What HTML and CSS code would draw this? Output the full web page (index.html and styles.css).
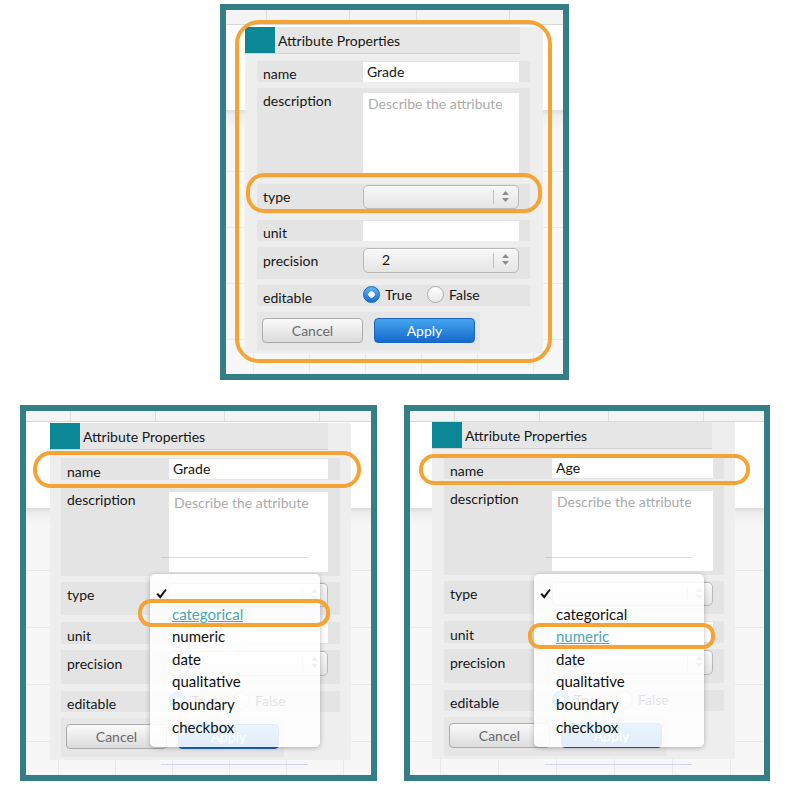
FILE: index.html
```html
<!DOCTYPE html>
<html>
<head>
<meta charset="utf-8">
<title>Attribute Properties</title>
<link rel="stylesheet" href="styles.css">
</head>
<body>
<div class="page">
  <div class="top-row">
    <div class="panel panel-top">
      <div class="strip"><span class="c1"></span><span class="c2"></span><span class="c3"></span><span class="c4"></span></div>
      <div class="dialog">
        <div class="dlg-head"><div class="dlg-icon"></div><div class="dlg-title">Attribute Properties</div></div>
        <div class="dlg-body">
          <div class="frow r-name"><span class="lbl lbl-b">name</span><div class="inp">Grade</div></div>
          <div class="frow r-desc"><span class="lbl lbl-t">description</span><div class="ta">Describe the attribute</div></div>
          <div class="frow r-type"><span class="lbl lbl-c">type</span><div class="sel"><span class="sel-val"></span><span class="sel-div"></span><svg class="sel-arr" width="7" height="11" viewBox="0 0 7 11"><path d="M3.5 0 L7 4 L0 4 Z M0 7 L7 7 L3.5 11 Z" fill="#8c8c8c"/></svg></div></div>
          <div class="frow r-unit"><span class="lbl lbl-b">unit</span><div class="inp"></div></div>
          <div class="frow r-prec"><span class="lbl lbl-p">precision</span><div class="sel sel-p"><span class="sel-val">2</span><span class="sel-div"></span><svg class="sel-arr" width="7" height="11" viewBox="0 0 7 11"><path d="M3.5 0 L7 4 L0 4 Z M0 7 L7 7 L3.5 11 Z" fill="#8c8c8c"/></svg></div></div>
          <div class="frow r-edit"><span class="lbl lbl-b">editable</span><div class="radios"><span class="opt"><span class="rb on"></span>True</span><span class="opt"><span class="rb off"></span>False</span></div></div>
          <div class="btns"><button class="btn cancel">Cancel</button><button class="btn apply">Apply</button></div>
        </div>
      </div>
      <div class="ring ring-top-big"></div>
      <div class="ring ring-top-type"></div>
    </div>
  </div>

  <div class="bottom-row">
    <div class="panel panel-bl">
      <div class="strip"><span class="c1"></span><span class="c2"></span><span class="c3"></span><span class="c4"></span></div>
      <div class="dialog">
        <div class="dlg-head"><div class="dlg-icon"></div><div class="dlg-title">Attribute Properties</div></div>
        <div class="dlg-body">
          <div class="frow r-name"><span class="lbl lbl-b">name</span><div class="inp">Grade</div></div>
          <div class="frow r-desc"><span class="lbl lbl-t">description</span><div class="ta">Describe the attribute</div></div>
          <div class="frow r-type"><span class="lbl lbl-c">type</span><div class="sel"><span class="sel-val"></span><span class="sel-div"></span><svg class="sel-arr" width="7" height="11" viewBox="0 0 7 11"><path d="M3.5 0 L7 4 L0 4 Z M0 7 L7 7 L3.5 11 Z" fill="#8c8c8c"/></svg></div></div>
          <div class="frow r-unit"><span class="lbl lbl-b">unit</span><div class="inp"></div></div>
          <div class="frow r-prec"><span class="lbl lbl-p">precision</span><div class="sel sel-p"><span class="sel-val">2</span><span class="sel-div"></span><svg class="sel-arr" width="7" height="11" viewBox="0 0 7 11"><path d="M3.5 0 L7 4 L0 4 Z M0 7 L7 7 L3.5 11 Z" fill="#8c8c8c"/></svg></div></div>
          <div class="frow r-edit"><span class="lbl lbl-b">editable</span><div class="radios"><span class="opt"><span class="rb on"></span>True</span><span class="opt"><span class="rb off"></span>False</span></div></div>
          <div class="btns"><button class="btn cancel">Cancel</button><button class="btn apply">Apply</button></div>
        </div>
        <div class="menu">
          <div class="mi"><svg class="check" width="11" height="10" viewBox="0 0 11 10"><path d="M0.4 5.3 L2.2 4 L4.1 6.5 L9.2 0 L10.7 1.1 L4.3 9.7 Z" fill="#111"/></svg></div>
          <div class="mi"><span class="hl">categorical</span></div>
          <div class="mi">numeric</div>
          <div class="mi">date</div>
          <div class="mi">qualitative</div>
          <div class="mi">boundary</div>
          <div class="mi">checkbox</div>
        </div>
      </div>
      <div class="ghost g1"></div>
      <div class="ghost g2"></div>
      <div class="ring ring-bl-name"></div>
      <div class="ring ring-bl-cat"></div>
    </div>

    <div class="panel panel-br">
      <div class="strip"><span class="c1"></span><span class="c2"></span><span class="c3"></span><span class="c4"></span></div>
      <div class="dialog">
        <div class="dlg-head"><div class="dlg-icon"></div><div class="dlg-title">Attribute Properties</div></div>
        <div class="dlg-body">
          <div class="frow r-name"><span class="lbl lbl-b">name</span><div class="inp">Age</div></div>
          <div class="frow r-desc"><span class="lbl lbl-t">description</span><div class="ta">Describe the attribute</div></div>
          <div class="frow r-type"><span class="lbl lbl-c">type</span><div class="sel"><span class="sel-val"></span><span class="sel-div"></span><svg class="sel-arr" width="7" height="11" viewBox="0 0 7 11"><path d="M3.5 0 L7 4 L0 4 Z M0 7 L7 7 L3.5 11 Z" fill="#8c8c8c"/></svg></div></div>
          <div class="frow r-unit"><span class="lbl lbl-b">unit</span><div class="inp"></div></div>
          <div class="frow r-prec"><span class="lbl lbl-p">precision</span><div class="sel sel-p"><span class="sel-val">2</span><span class="sel-div"></span><svg class="sel-arr" width="7" height="11" viewBox="0 0 7 11"><path d="M3.5 0 L7 4 L0 4 Z M0 7 L7 7 L3.5 11 Z" fill="#8c8c8c"/></svg></div></div>
          <div class="frow r-edit"><span class="lbl lbl-b">editable</span><div class="radios"><span class="opt"><span class="rb on"></span>True</span><span class="opt"><span class="rb off"></span>False</span></div></div>
          <div class="btns"><button class="btn cancel">Cancel</button><button class="btn apply">Apply</button></div>
        </div>
        <div class="menu">
          <div class="mi"><svg class="check" width="11" height="10" viewBox="0 0 11 10"><path d="M0.4 5.3 L2.2 4 L4.1 6.5 L9.2 0 L10.7 1.1 L4.3 9.7 Z" fill="#111"/></svg></div>
          <div class="mi">categorical</div>
          <div class="mi"><span class="hl">numeric</span></div>
          <div class="mi">date</div>
          <div class="mi">qualitative</div>
          <div class="mi">boundary</div>
          <div class="mi">checkbox</div>
        </div>
      </div>
      <div class="ghost g1"></div>
      <div class="ghost g2"></div>
      <div class="ring ring-br-name"></div>
      <div class="ring ring-br-num"></div>
    </div>
  </div>
</div>
</body>
</html>
```

FILE: styles.css
```css
* { box-sizing: border-box; }
html, body { margin: 0; padding: 0; background: #fff; }
body {
  width: 788px;
  height: 787px;
  overflow: hidden;
  font-family: Lato, "Open Sans", "Liberation Sans", sans-serif;
  color: #1b1b1b;
}

.page { padding-top: 4px; }
.top-row { display: flex; padding-left: 220px; }
.bottom-row { display: flex; gap: 27px; padding-left: 20px; margin-top: 25px; }

/* ---------- teal framed canvas ---------- */
.panel {
  position: relative;
  height: 376px;
  border: 6px solid #347e86;
  overflow: hidden;
  background-color: #f7f7f7;
  background-image:
    linear-gradient(#fff, #fff),
    linear-gradient(#dcdcdc, #eeeeee 5px, #f5f5f5 16px, #f7f7f7),
    linear-gradient(90deg, #e9e9e9 1px, transparent 1px),
    linear-gradient(#e9e9e9 1px, transparent 1px);
  background-repeat: no-repeat, no-repeat, repeat, repeat;
}
.panel-top {
  width: 349px;
  --dw: 298px; --dx: 19px; --dy: 2px;
  --pt: 7px; --pl: 12px; --pr: 13px; --gap: 6px;
  --iw: 156px; --ir: 11px;
  --hn: 21px; --hd: 90px; --ht: 30px; --hp: 32px; --he: 21px; --hb: 38px;
  background-size: 100% 100px, 100% 20px, 56px 56px, 56px 56px;
  background-position: 0 0, 0 100px, 27px 0, 0 49px;
}
.panel-bl {
  width: 357px;
  --dw: 301px; --dx: 24px; --dy: 1px;
  --pt: 8px; --pl: 11px; --pr: 11px; --gap: 6.5px;
  --iw: 159px; --ir: 12px;
  --hn: 22px; --hd: 89px; --ht: 33px; --hp: 34px; --he: 21px; --hb: 39px;
  --mx: 100px; --my: 151px;
  background-size: 100% 97px, 100% 20px, 57px 57px, 57px 57px;
  background-position: 0 0, 0 97px, 32px 0, 0 45px;
}
.panel-br {
  width: 366px;
  --dw: 303px; --dx: 22px; --dy: 0px;
  --pt: 8px; --pl: 12px; --pr: 11px; --gap: 6.5px;
  --iw: 161px; --ir: 11px;
  --hn: 22px; --hd: 89px; --ht: 33px; --hp: 34px; --he: 21px; --hb: 39px;
  --mx: 102px; --my: 152px;
  background-size: 100% 97px, 100% 20px, 58px 57px, 58px 57px;
  background-position: 0 0, 0 97px, 30px 0, 0 45px;
}

.strip {
  display: flex;
  height: 11px;
  background: #f4f4f4;
  border-bottom: 1px solid #d8d8d8;
}
.panel-top .strip { height: 15px; }
.strip span { border-right: 1px solid #dedede; }
.strip .c1 { width: 45px; }
.strip .c2 { width: 85px; }
.strip .c3 { width: 69px; }
.strip .c4 { width: 95px; }
.panel-top .strip .c1 { width: 41px; }
.panel-top .strip .c2 { width: 83px; }
.panel-top .strip .c3 { width: 67px; }
.panel-top .strip .c4 { width: 93px; }

/* ---------- dialog ---------- */
.dialog {
  position: relative;
  width: var(--dw);
  margin-left: var(--dx);
  margin-top: var(--dy);
  padding-bottom: 3px;
  background: #eeeeee;
}
.dlg-head {
  display: flex;
  height: 27px;
  margin-right: 23px;
  border-bottom: 1px solid #d2d2d2;
}
.dlg-icon { width: 30px; background: #0b8795; }
.dlg-title {
  flex: 1;
  background: #e6e6e6;
  font-size: 14px;
  line-height: 24px;
  padding: 2px 0 0 3px;
  color: #161616;
}
.dlg-body {
  display: flex;
  flex-direction: column;
  gap: var(--gap);
  padding: var(--pt) var(--pr) 0 var(--pl);
}

.frow {
  display: flex;
  align-items: flex-start;
  background: #e4e4e4;
  padding-right: var(--ir);
}
.r-name, .r-unit { height: var(--hn); }
.r-desc { height: var(--hd); }
.r-type { height: var(--ht); }
.r-prec { height: var(--hp); }
.r-edit { height: var(--he); }

.lbl {
  flex: 1;
  padding-left: 6px;
  font-size: 14px;
  line-height: 17px;
  color: #161616;
}
.lbl-b { align-self: flex-end; }
.lbl-t { padding-top: 4px; }
.lbl-c { line-height: 24px; margin-top: 1px; }
.lbl-p { line-height: 25px; margin-top: 1px; }

.inp {
  width: var(--iw);
  height: 20px;
  margin-top: 1px;
  background: #fff;
  font-size: 14px;
  line-height: 19px;
  padding-left: 4px;
  color: #161616;
}
.ta {
  width: var(--iw);
  height: calc(var(--hd) - 9px);
  margin-top: 5px;
  background: #fff;
  font-size: 14px;
  line-height: 17px;
  padding: 2px 0 0 5px;
  color: #ababab;
}

.sel {
  position: relative;
  width: var(--iw);
  height: 24px;
  margin-top: 1px;
  border: 1px solid #b8b8b8;
  border-radius: 5px;
  background: linear-gradient(#f8f8f8, #e5e5e5);
  box-shadow: inset 0 1px 0 #fff;
  font-size: 14px;
  line-height: 22px;
  padding-left: 18px;
  color: #161616;
}
.sel-p { height: 25px; line-height: 22px; }
.sel-div {
  position: absolute;
  right: 24px;
  top: 4px;
  bottom: 4px;
  width: 1px;
  background: #c2c2c2;
}
.sel-arr { position: absolute; right: 9px; top: 5px; }

.radios {
  width: var(--iw);
  display: flex;
  align-items: center;
  margin-top: 1px;
  font-size: 14px;
  line-height: 17px;
  color: #161616;
}
.opt { display: flex; align-items: center; }
.opt + .opt { margin-left: 15px; }
.rb {
  width: 17px;
  height: 17px;
  border-radius: 50%;
  margin-right: 5px;
}
.rb.on {
  border: 1px solid #1a63b8;
  background:
    radial-gradient(circle, #ffffff 0 2.5px, #e8eef5 3px, transparent 3.5px),
    linear-gradient(#5db3f3, #1a70d2);
}
.rb.off {
  border: 1px solid #ababab;
  background: linear-gradient(#fefefe, #e8e8e8);
}

.btns {
  display: flex;
  gap: 11px;
  width: 223px;
  height: var(--hb);
  padding: 6px 5px 0;
  background: #e6e6e6;
}
.btn {
  width: 101px;
  height: 25px;
  border-radius: 4px;
  font-family: Lato, "Open Sans", sans-serif;
  font-size: 14px;
  padding: 0;
}
.cancel {
  background: linear-gradient(#fafafa, #dcdcdc);
  border: 1px solid #ababab;
  color: #6a6a6a;
}
.apply {
  background: linear-gradient(#44a6ee, #1668cd);
  border: 1px solid #1965c0;
  color: #fff;
}

/* ---------- dropdown menu ---------- */
.menu {
  position: absolute;
  left: var(--mx);
  top: var(--my);
  width: 170px;
  height: 173px;
  padding-top: 6px;
  background: rgba(255, 255, 255, 0.88);
  border-radius: 5px;
  box-shadow: 0 1px 5px rgba(0, 0, 0, 0.28);
  font-size: 15px;
}
.mi {
  position: relative;
  height: 22.6px;
  line-height: 22.6px;
  padding-left: 22px;
  color: #111;
}
.mi .hl { color: #4aa7b3; text-decoration: underline; text-underline-offset: 1px; }
.check { position: absolute; left: 6px; top: 9px; }

/* faint artifacts */
.ghost {
  position: absolute;
  left: 135px;
  width: 147px;
  height: 1px;
  background: rgba(140, 180, 220, 0.45);
}
.ghost.g1 { top: 146px; }
.ghost.g2 { top: 353px; }

/* ---------- orange highlight rings ---------- */
.ring { position: absolute; border: 4px solid #f6a335; }
.ring-top-big { left: 9px; top: 10px; width: 317px; height: 343px; border-radius: 24px; }
.ring-top-type { left: 20px; top: 163px; width: 296px; height: 40px; border-radius: 18px; }
.ring-bl-name { left: 7px; top: 40px; width: 328px; height: 37px; border-radius: 18px; }
.ring-bl-cat { left: 112px; top: 188px; width: 192px; height: 28px; border-radius: 13px; }
.ring-br-name { left: 9px; top: 43px; width: 331px; height: 31px; border-radius: 15px; }
.ring-br-num { left: 118px; top: 212px; width: 187px; height: 26px; border-radius: 12px; }
```
